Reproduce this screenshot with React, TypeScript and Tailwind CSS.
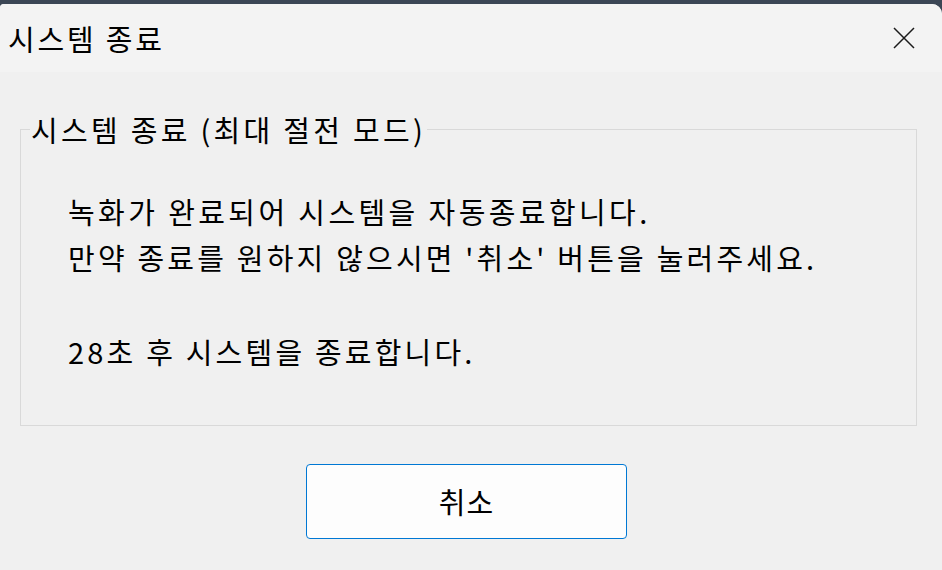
import React from "react";

const font = { fontFamily: '"Noto Sans CJK KR", "Noto Sans", sans-serif' };

export default function App() {
  return (
    <div className="w-[942px] h-[570px] bg-[#3b4655] flex flex-col overflow-hidden" style={font}>
      <div className="mt-[4px] flex-1 flex flex-col bg-[#f0f0f0] rounded-tl-[4px] rounded-tr-[10px] overflow-hidden">
        <div className="h-[68px] shrink-0 bg-[#f3f3f3] flex items-center justify-between pl-[8px] pr-[27px]">
          <span className="text-[29px] leading-none tracking-[2.8px] text-black">시스템 종료</span>
          <svg width="22" height="22" viewBox="0 0 22 22" className="block">
            <path d="M1 1 L21 21 M21 1 L1 21" stroke="#1b1b1b" strokeWidth="1.5" fill="none" />
          </svg>
        </div>
        <div className="flex flex-col pl-[20px] pr-[25px] pt-[57px]">
          <div className="relative h-[297px] border border-[#d9d9d9]">
            <span className="absolute left-[9px] top-[-19px] bg-[#f0f0f0] px-[1px] text-[29px] leading-[36px] tracking-[3.3px] text-black">
              시스템 종료 (최대 절전 모드)
            </span>
            <div className="pl-[47px] pt-[58px] text-[29px] leading-[46px] text-black">
              <div className="tracking-[3.4px]">녹화가 완료되어 시스템을 자동종료합니다.</div>
              <div className="tracking-[3.2px]">만약 종료를 원하지 않으시면 '취소' 버튼을 눌러주세요.</div>
              <div className="h-[48px]" />
              <div className="tracking-[3.2px]">28초 후 시스템을 종료합니다.</div>
            </div>
          </div>
          <div className="pl-[286px] pt-[38px]">
            <button className="w-[321px] h-[75px] bg-[#fdfdfd] border border-[#0078d4] rounded-[4px] text-[29px] tracking-[1px] text-black flex items-center justify-center">
              취소
            </button>
          </div>
        </div>
      </div>
    </div>
  );
}
